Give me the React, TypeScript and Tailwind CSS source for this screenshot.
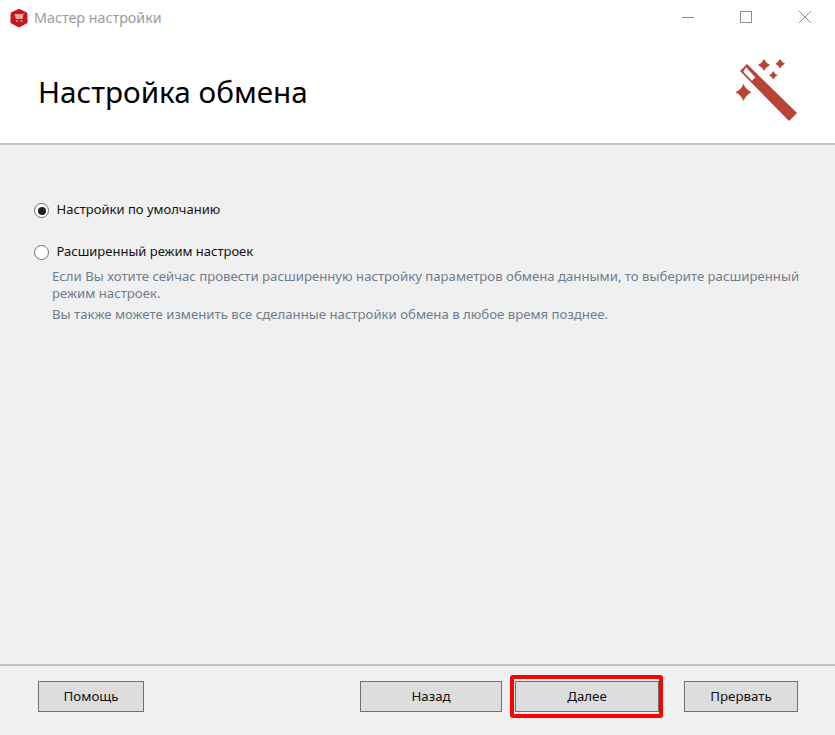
import React from 'react';

const WandIcon = () => (
  <svg viewBox="735 58 64 64" className="h-[64px] w-[64px]" fill="#b94335">
    {/* handle */}
    <path d="M747 64 L797 113 L789 121 L740 71 Z" />
    <path d="M746 67.3 L755.3 77.3 L752 80.7 L743.3 71.7 Z" fill="#ffffff" />
    {/* sparkles */}
    <path d="M764 59 Q766 63 770 65 Q766 67 764 71 Q762 67 758 65 Q762 63 764 59 Z" />
    <path d="M780 59 Q781.6 62 785 63.7 Q781.6 65.4 780 68.5 Q778.4 65.4 775.5 63.7 Q778.4 62 780 59 Z" />
    <path d="M773.3 71 Q774.6 74 777.5 75.3 Q774.6 76.6 773.3 79.5 Q772 76.6 769 75.3 Q772 74 773.3 71 Z" />
    <path d="M743.5 84 Q746 89.8 751.5 92.3 Q746 94.8 743.5 101 Q741 94.8 735.5 92.3 Q741 89.8 743.5 84 Z" />
  </svg>
);

const AppIcon = () => (
  <svg viewBox="0 0 20 20" className="h-[20px] w-[20px]">
    <path
      d="M10 0.8 L17.5 4.2 Q18.3 4.6 18.3 5.5 L18.6 14 Q18.6 14.8 18 15.2 L10.6 19.2 Q10 19.5 9.4 19.2 L2 15.2 Q1.4 14.8 1.4 14 L1.7 5.5 Q1.7 4.6 2.5 4.2 Z"
      fill="#c8161d"
    />
    <path d="M5.5 6 H14.5 L13.5 11 H7 Z" fill="#e9a3a3" />
    <path d="M14.5 6 L15.5 4.8" stroke="#e9a3a3" strokeWidth="1" />
    <circle cx="8" cy="13" r="1" fill="#e9a3a3" />
    <circle cx="12.5" cy="13" r="1" fill="#e9a3a3" />
  </svg>
);

const WindowControls = () => (
  <div className="ml-auto mt-[-3px] flex items-center gap-[46px] pr-[24px]">
    <svg viewBox="0 0 12 12" className="h-[12px] w-[12px]" stroke="#8f8f8f" fill="none">
      <path d="M0 6.5 H12" />
    </svg>
    <svg viewBox="0 0 12 12" className="h-[12px] w-[12px]" stroke="#8f8f8f" fill="none">
      <rect x="0.5" y="0.5" width="11" height="11" />
    </svg>
    <svg viewBox="0 0 12 12" className="ml-[1px] h-[12px] w-[12px]" stroke="#8f8f8f" fill="none">
      <path d="M0 0 L12 12 M12 0 L0 12" />
    </svg>
  </div>
);

const WizardButton: React.FC<{ label: string; className: string }> = ({ label, className }) => (
  <button className={`h-[31px] border border-[#707070] bg-[#dddddd] text-[13.3px] text-[#111111] ${className}`}>
    {label}
  </button>
);

const Radio: React.FC<{ checked?: boolean }> = ({ checked }) => (
  <span className="mt-[3px] flex h-[15px] w-[15px] shrink-0 items-center justify-center rounded-full border border-[#6f6f6f] bg-white">
    {checked && <span className="h-[8px] w-[8px] rounded-full bg-[#222222]" />}
  </span>
);

export default function App() {
  return (
    <div className="flex h-[735px] w-[835px] flex-col overflow-hidden bg-[#f0f0f0] font-['Noto_Sans',sans-serif]">
      {/* Header */}
      <div className="h-[145px] shrink-0 border-b-2 border-[#c4c4c4] bg-white">
        <div className="flex h-[36px] items-center pl-[9px]">
          <AppIcon />
          <span className="ml-[5px] text-[14.3px] text-[#9b9b9b]">Мастер настройки</span>
          <WindowControls />
        </div>
        <div className="flex items-start justify-between pl-[38px] pr-[36px]">
          <h1 className="mt-[36px] text-[29.7px] leading-[40px] text-black">Настройка обмена</h1>
          <div className="mt-[22px]">
            <WandIcon />
          </div>
        </div>
      </div>

      {/* Options */}
      <div className="flex-1 pl-[34px] pr-[30px] pt-[55px]">
        <label className="flex items-start gap-[7.5px] text-[13px] leading-[18px] text-[#111111]">
          <Radio checked />
          Настройки по умолчанию
        </label>
        <label className="mt-[24px] flex items-start gap-[7.5px] text-[13px] leading-[18px] text-[#111111]">
          <Radio />
          Расширенный режим настроек
        </label>
        <div className="ml-[18px] mt-[8px] w-[760px] text-[13.2px] leading-[17px] text-[#6f7d8c]">
          <p>
            Если Вы хотите сейчас провести расширенную настройку параметров обмена данными, то выберите расширенный
            режим настроек.
          </p>
          <p className="mt-[4px]">Вы также можете изменить все сделанные настройки обмена в любое время позднее.</p>
        </div>
      </div>

      {/* Footer */}
      <div className="flex h-[71px] shrink-0 items-start border-t-2 border-[#c4c4c4] pl-[38px] pt-[15px]">
        <WizardButton label="Помощь" className="w-[106px]" />
        <WizardButton label="Назад" className="ml-[216px] w-[142px]" />
        <div className="relative ml-[13px]">
          <WizardButton label="Далее" className="w-[144px]" />
          <div className="absolute -bottom-[6px] -left-[5px] -right-[4px] -top-[6px] rounded-[3px] border-[4px] border-[#ff0000]" />
        </div>
        <WizardButton label="Прервать" className="ml-[25px] w-[114px]" />
      </div>
    </div>
  );
}
